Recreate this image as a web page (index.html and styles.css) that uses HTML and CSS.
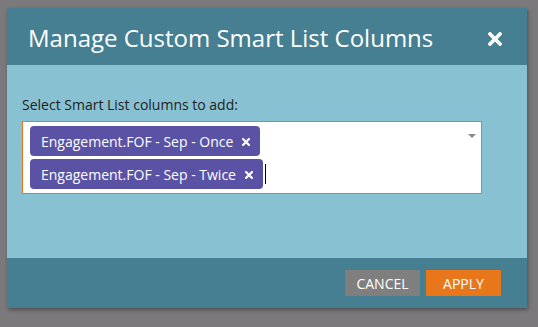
FILE: index.html
```html
<!DOCTYPE html>
<html>
<head>
<meta charset="utf-8">
<link rel="stylesheet" href="styles.css">
</head>
<body>
<div class="dialog">
  <div class="header">
    <div class="title">Manage Custom Smart List Columns</div>
    <svg class="close" width="14" height="14" viewBox="0 0 14 14"><path d="M2 2 L12 12 M12 2 L2 12" stroke="#fff" stroke-width="3.6" stroke-linecap="square"/></svg>
  </div>
  <div class="body">
    <div class="label">Select Smart List columns to add:</div>
    <div class="select">
      <div class="tags">
        <span class="tag">Engagement.FOF - Sep - Once<svg class="x" width="8" height="8" viewBox="0 0 8 8"><path d="M1 1 L7 7 M7 1 L1 7" stroke="#fff" stroke-width="2.2" stroke-linecap="square"/></svg></span>
        <span class="row"><span class="tag">Engagement.FOF - Sep - Twice<svg class="x" width="8" height="8" viewBox="0 0 8 8"><path d="M1 1 L7 7 M7 1 L1 7" stroke="#fff" stroke-width="2.2" stroke-linecap="square"/></svg></span><span class="caret"></span></span>
      </div>
      <span class="arrow"></span>
    </div>
  </div>
  <div class="footer">
    <button class="btn cancel">CANCEL</button>
    <button class="btn apply">APPLY</button>
  </div>
</div>
</body>
</html>
```
FILE: styles.css
```css
html, body { margin: 0; padding: 0; }
body {
  background: #7b797c;
  width: 538px;
  height: 327px;
  font-family: "Open Sans", sans-serif;
  padding: 8px 0 0 7px;
  box-sizing: border-box;
}
.dialog {
  width: 520px;
  height: 300px;
  display: flex;
  flex-direction: column;
  box-shadow: 1px 2px 4px rgba(0,0,0,0.35);
}
.header {
  height: 57px;
  background: #467f91;
  display: flex;
  align-items: flex-start;
  justify-content: space-between;
  padding: 13px 25px 0 21px;
  box-sizing: border-box;
}
.title {
  color: #fff;
  font-size: 24px;
  line-height: 33px;
}
.close { margin-top: 11px; }
.body {
  flex: 1;
  background: #88c1d2;
  padding: 30px 0 0 15px;
  box-sizing: border-box;
}
.label {
  font-size: 14px;
  color: #1e1e1e;
  line-height: 19px;
}
.select {
  margin-top: 7px;
  width: 460px;
  height: 73px;
  box-sizing: border-box;
  border: 1px solid #e8771f;
  background: #fff;
  position: relative;
  padding: 4px 7px;
}
.tags { display: flex; flex-direction: column; gap: 3px; align-items: flex-start; }
.row { display: flex; align-items: center; }
.tag {
  display: inline-flex;
  align-items: center;
  background: #5a53a5;
  color: #fff;
  font-size: 14px;
  height: 30px;
  border-radius: 4px;
  padding: 0 10px 0 11px;
  box-sizing: border-box;
}
.x { margin-left: 9px; margin-top: 1px; }
.caret {
  width: 1px;
  height: 20px;
  background: #000;
  margin-left: 2px;
}
.arrow {
  position: absolute;
  right: 5px;
  top: 12px;
  width: 0; height: 0;
  border-left: 4px solid transparent;
  border-right: 4px solid transparent;
  border-top: 4px solid #888;
}
.footer {
  height: 50px;
  background: #467f91;
  display: flex;
  justify-content: flex-end;
  align-items: flex-start;
  gap: 6px;
  padding: 12px 26px 0 0;
  box-sizing: border-box;
}
.btn {
  border: none;
  height: 26px;
  width: 75px;
  color: #fff;
  font-family: "Open Sans", sans-serif;
  font-size: 14px;
  padding: 0;
}
.cancel { background: #7f7f7f; }
.apply { background: #e8771c; }
```
